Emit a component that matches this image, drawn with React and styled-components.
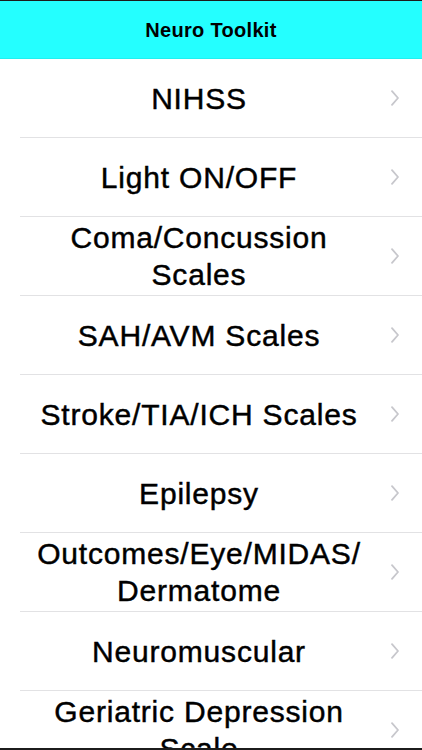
import React from "react";
import styled, { createGlobalStyle } from "styled-components";

const Global = createGlobalStyle`
  html, body { margin: 0; padding: 0; background: #ffffff; }
  body { font-family: "Liberation Sans", Arial, Helvetica, sans-serif; }
`;

const Screen = styled.div`
  width: 422px;
  height: 750px;
  box-sizing: border-box;
  border-top: 1px solid #1c1c1c;
  border-bottom: 2px solid #1c1c1c;
  overflow: hidden;
  display: flex;
  flex-direction: column;
  background: #ffffff;
`;

const NavBar = styled.header`
  flex: 0 0 58px;
  height: 58px;
  background: #24ffff;
  display: flex;
  align-items: center;
  justify-content: center;
  box-shadow: inset 0 -1px 0 rgba(0, 0, 0, 0.06);
`;

const Title = styled.h1`
  margin: 0;
  font-size: 20px;
  font-weight: 700;
  color: #000;
  letter-spacing: 0.3px;
`;

const List = styled.ul`
  list-style: none;
  margin: 0;
  padding: 0;
  display: flex;
  flex-direction: column;
`;

const Row = styled.li`
  position: relative;
  flex: 0 0 79px;
  height: 79px;
  box-sizing: border-box;
  padding-bottom: 1px;
  display: grid;
  grid-template-columns: 24px 350px 17px 8px 23px;
  align-items: center;
  &::after {
    content: "";
    position: absolute;
    left: 20px;
    right: 0;
    bottom: 0;
    height: 1px;
    background: #e2e2e4;
  }
`;

const Label = styled.span`
  grid-column: 2;
  text-align: center;
  font-size: 30px;
  line-height: 37px;
  color: #000;
  letter-spacing: 0.8px;
  -webkit-text-stroke: 0.45px #000;
`;

const Chevron = styled.svg`
  grid-column: 4;
  width: 8px;
  height: 16px;
  display: block;
`;

const items = [
  "NIHSS",
  "Light ON/OFF",
  "Coma/Concussion Scales",
  "SAH/AVM Scales",
  "Stroke/TIA/ICH Scales",
  "Epilepsy",
  <>Outcomes/Eye/MIDAS/<wbr />Dermatome</>,
  "Neuromuscular",
  "Geriatric Depression Scale",
];

export default function App() {
  return (
    <>
      <Global />
      <Screen>
        <NavBar>
          <Title>Neuro Toolkit</Title>
        </NavBar>
        <List>
          {items.map((label, i) => (
            <Row key={i}>
              <Label>{label}</Label>
              <Chevron viewBox="0 0 8 16" fill="none">
                <path
                  d="M1 1.2 L7 8 L1 14.8"
                  stroke="#c7c7cc"
                  strokeWidth="1.8"
                  strokeLinecap="round"
                  strokeLinejoin="round"
                />
              </Chevron>
            </Row>
          ))}
        </List>
      </Screen>
    </>
  );
}
